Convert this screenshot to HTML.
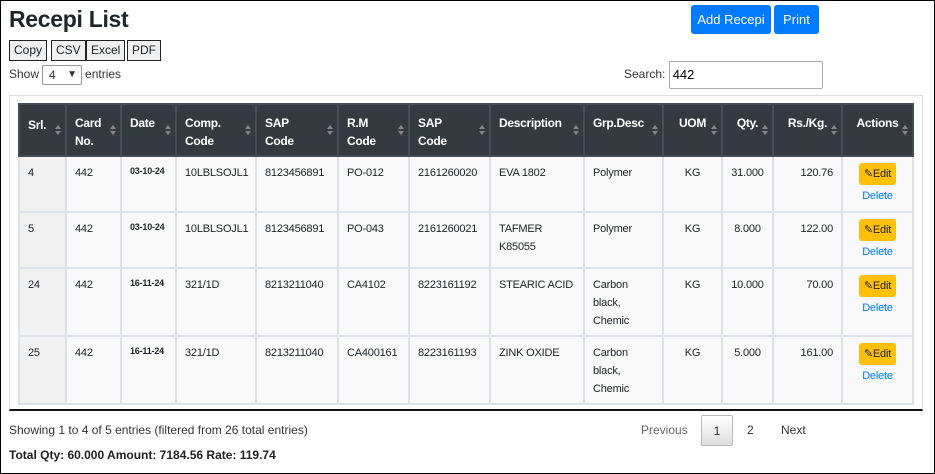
<!DOCTYPE html>
<html><head><style>
*{box-sizing:border-box}
body{margin:0;width:935px;height:474px;overflow:hidden;font-family:"Liberation Sans",sans-serif;color:#212529;background:#fff}
.frame{position:absolute;left:0;top:0;width:935px;height:474px;border:1px solid #000}
h1{position:absolute;left:9px;top:6px;margin:0;font-size:23px;font-weight:bold;color:#212529;letter-spacing:-0.3px}
.eb{position:absolute;top:40px;height:21px;border:1px solid #222;background:#efefef;font-size:12px;line-height:19px;padding:0 4px}
.show{position:absolute;left:9px;top:65px;font-size:12px;color:#333}
.sel{display:inline-block;width:40px;height:20px;border:1px solid #999;border-radius:2px;vertical-align:middle;margin:0 3px;padding:0 6px;line-height:18px;position:relative}
.btn{position:absolute;top:5px;height:29px;background:#007bff;color:#fff;border-radius:3px;font-size:13px;line-height:29px;text-align:center}
.search{position:absolute;left:624px;top:61px;font-size:12px;color:#333}
.search span{display:inline-block;width:154px;height:28px;border:1px solid #aaa;border-radius:2px;vertical-align:middle;padding-left:3px;line-height:26px;color:#000;font-size:13px}
.wrap{position:absolute;left:9px;top:95px;width:914px;height:316px;border:1px solid #ddd;border-bottom:2px solid #111}
table{position:absolute;left:8px;top:7px;border-collapse:collapse;table-layout:fixed;width:895px;font-size:11px;letter-spacing:-0.2px}
th{background:#343a40;color:#fff;text-align:left;vertical-align:top;padding:9px 8px 0;height:52px;border:2px solid #454d55;font-size:12px;line-height:18px;position:relative;letter-spacing:-0.3px}
th:after{content:"";position:absolute;right:4px;top:20px;width:0;height:0;border-left:3px solid transparent;border-right:3px solid transparent;border-bottom:4px solid #888;}
th:before{content:"";position:absolute;right:4px;top:26px;width:0;height:0;border-left:3px solid transparent;border-right:3px solid transparent;border-top:4px solid #888;}
td{border:2px solid #dee2e6;vertical-align:top;padding:7px 8px 4px;line-height:18px;background:#f9f9f9;overflow:hidden}
td.s{background:#f1f1f1}
td.d{font-size:9px;font-weight:bold;padding-top:5px}
.c{text-align:center}.r{text-align:right}
.edit{display:inline-block;background:#ffc107;color:#212529;border-radius:3px;padding:3px 5px;font-size:11px;line-height:16px}
.del{color:#007bff;display:block;margin-top:2px}
.info{position:absolute;left:9px;top:423px;font-size:12px;color:#333}
.tot{position:absolute;left:9px;top:448px;font-size:12px;font-weight:bold;color:#222}
.pg{position:absolute;top:415px;font-size:12px;color:#333;line-height:30px}
</style></head><body>
<div class="frame"></div>
<h1>Recepi List</h1>
<div class="eb" style="left:9px">Copy</div>
<div class="eb" style="left:51px">CSV</div>
<div class="eb" style="left:86px">Excel</div>
<div class="eb" style="left:127px">PDF</div>
<div class="show">Show<span class="sel">4<span style="position:absolute;right:4px;top:0;font-size:10px">&#9660;</span></span>entries</div>
<div class="btn" style="left:691px;width:80px">Add Recepi</div>
<div class="btn" style="left:774px;width:45px">Print</div>
<div class="search">Search: <span>442</span></div>
<div class="wrap">
<table>
<colgroup><col style="width:47px"><col style="width:55px"><col style="width:55px"><col style="width:80px"><col style="width:82px"><col style="width:71px"><col style="width:81px"><col style="width:94px"><col style="width:79px"><col style="width:59px"><col style="width:51px"><col style="width:69px"><col style="width:71px"></colgroup>
<tr><th style="padding-top:11px">Srl.</th><th>Card<br>No.</th><th>Date</th><th>Comp.<br>Code</th><th>SAP<br>Code</th><th>R.M<br>Code</th><th>SAP<br>Code</th><th>Description</th><th>Grp.Desc</th><th class="c">UOM</th><th class="c">Qty.</th><th class="c">Rs./Kg.</th><th class="c">Actions</th></tr>
<tr style="height:56px"><td class="s">4</td><td>442</td><td class="d">03-10-24</td><td>10LBLSOJL1</td><td>8123456891</td><td>PO-012</td><td>2161260020</td><td>EVA 1802</td><td>Polymer</td><td class="c">KG</td><td class="c">31.000</td><td class="r">120.76</td><td class="c" style="padding:6px 2px 2px"><span class="edit">&#9998;Edit</span><span class="del">Delete</span></td></tr>
<tr style="height:56px"><td class="s">5</td><td>442</td><td class="d">03-10-24</td><td>10LBLSOJL1</td><td>8123456891</td><td>PO-043</td><td>2161260021</td><td>TAFMER K85055</td><td>Polymer</td><td class="c">KG</td><td class="c">8.000</td><td class="r">122.00</td><td class="c" style="padding:6px 2px 2px"><span class="edit">&#9998;Edit</span><span class="del">Delete</span></td></tr>
<tr style="height:68px"><td class="s">24</td><td>442</td><td class="d">16-11-24</td><td>321/1D</td><td>8213211040</td><td>CA4102</td><td>8223161192</td><td style="white-space:nowrap">STEARIC ACID</td><td>Carbon black, Chemic</td><td class="c">KG</td><td class="c">10.000</td><td class="r">70.00</td><td class="c" style="padding:6px 2px 2px"><span class="edit">&#9998;Edit</span><span class="del">Delete</span></td></tr>
<tr style="height:68px"><td class="s">25</td><td>442</td><td class="d">16-11-24</td><td>321/1D</td><td>8213211040</td><td>CA400161</td><td>8223161193</td><td>ZINK OXIDE</td><td>Carbon black, Chemic</td><td class="c">KG</td><td class="c">5.000</td><td class="r">161.00</td><td class="c" style="padding:6px 2px 2px"><span class="edit">&#9998;Edit</span><span class="del">Delete</span></td></tr>
</table>
</div>
<div class="info">Showing 1 to 4 of 5 entries (filtered from 26 total entries)</div>
<div class="tot">Total Qty: 60.000 Amount: 7184.56 Rate: 119.74</div>
<div class="pg" style="left:641px;color:#666">Previous</div>
<div class="pg" style="left:701px;width:32px;height:31px;border:1px solid #bbb;border-radius:2px;background:linear-gradient(#fff,#ddd);text-align:center">1</div>
<div class="pg" style="left:747px">2</div>
<div class="pg" style="left:781px">Next</div>
</body></html>
